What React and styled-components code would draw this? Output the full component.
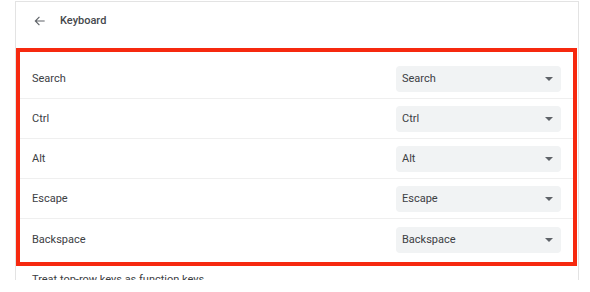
import React from 'react';
import styled, { createGlobalStyle } from 'styled-components';

const GlobalStyle = createGlobalStyle`
  body {
    margin: 0;
    background: #ffffff;
    font-family: Roboto, "Liberation Sans", Arial, sans-serif;
  }
`;

const Page = styled.div`
  width: 590px;
  height: 280px;
  overflow: hidden;
  padding: 1px 11px 0 15px;
  box-sizing: border-box;
`;

const Card = styled.div`
  border: 1px solid #e3e3e3;
  border-bottom: 0;
  height: 320px;
`;

const Header = styled.div`
  height: 46px;
  box-sizing: border-box;
  display: flex;
  align-items: flex-start;
  gap: 13px;
  padding: 12px 0 0 17px;
  line-height: 14px;
  color: #45484c;
  font-size: 11px;
  font-weight: 500;
`;

const BackIcon = styled.svg`
  width: 14px;
  height: 14px;
  color: #5f6368;
`;

const Highlight = styled.div`
  border: 4px solid #f6290f;
  margin-right: 1px;
  padding-top: 7px;
  padding-bottom: 2px;
`;

const Row = styled.div`
  display: flex;
  align-items: center;
  justify-content: space-between;
  padding: 0 12px;
  border-bottom: ${p => (p.$last ? 'none' : '1px solid #efefef')};
  box-sizing: border-box;
  height: ${p => (p.$last ? '41px' : '40px')};
`;

const Label = styled.span`
  font-size: 11px;
  color: #3c4043;
`;

const Select = styled.div`
  width: 165px;
  height: 26px;
  border-radius: 4px;
  background: #f1f3f4;
  display: flex;
  align-items: center;
  justify-content: space-between;
  padding: 0 8px 0 6px;
  box-sizing: border-box;
  font-size: 11px;
  color: #3c4043;
`;

const Caret = styled.span`
  width: 0;
  height: 0;
  border-left: 4px solid transparent;
  border-right: 4px solid transparent;
  border-top: 4px solid #5f6368;
`;

const Footer = styled.div`
  padding: 7px 12px 0 16px;
  font-size: 11px;
  color: #3c4043;
`;

const keys = ['Search', 'Ctrl', 'Alt', 'Escape', 'Backspace'];

export default function App() {
  return (
    <Page>
      <GlobalStyle />
      <Card>
        <Header>
          <BackIcon viewBox="0 0 24 24" fill="none" stroke="currentColor" strokeWidth="2">
            <path d="M20 12H5M11 5l-7 7 7 7" />
          </BackIcon>
          Keyboard
        </Header>
        <Highlight>
          {keys.map((k, i) => (
            <Row key={k} $last={i === keys.length - 1}>
              <Label>{k}</Label>
              <Select>
                {k}
                <Caret />
              </Select>
            </Row>
          ))}
        </Highlight>
        <Footer>Treat top-row keys as function keys</Footer>
      </Card>
    </Page>
  );
}
